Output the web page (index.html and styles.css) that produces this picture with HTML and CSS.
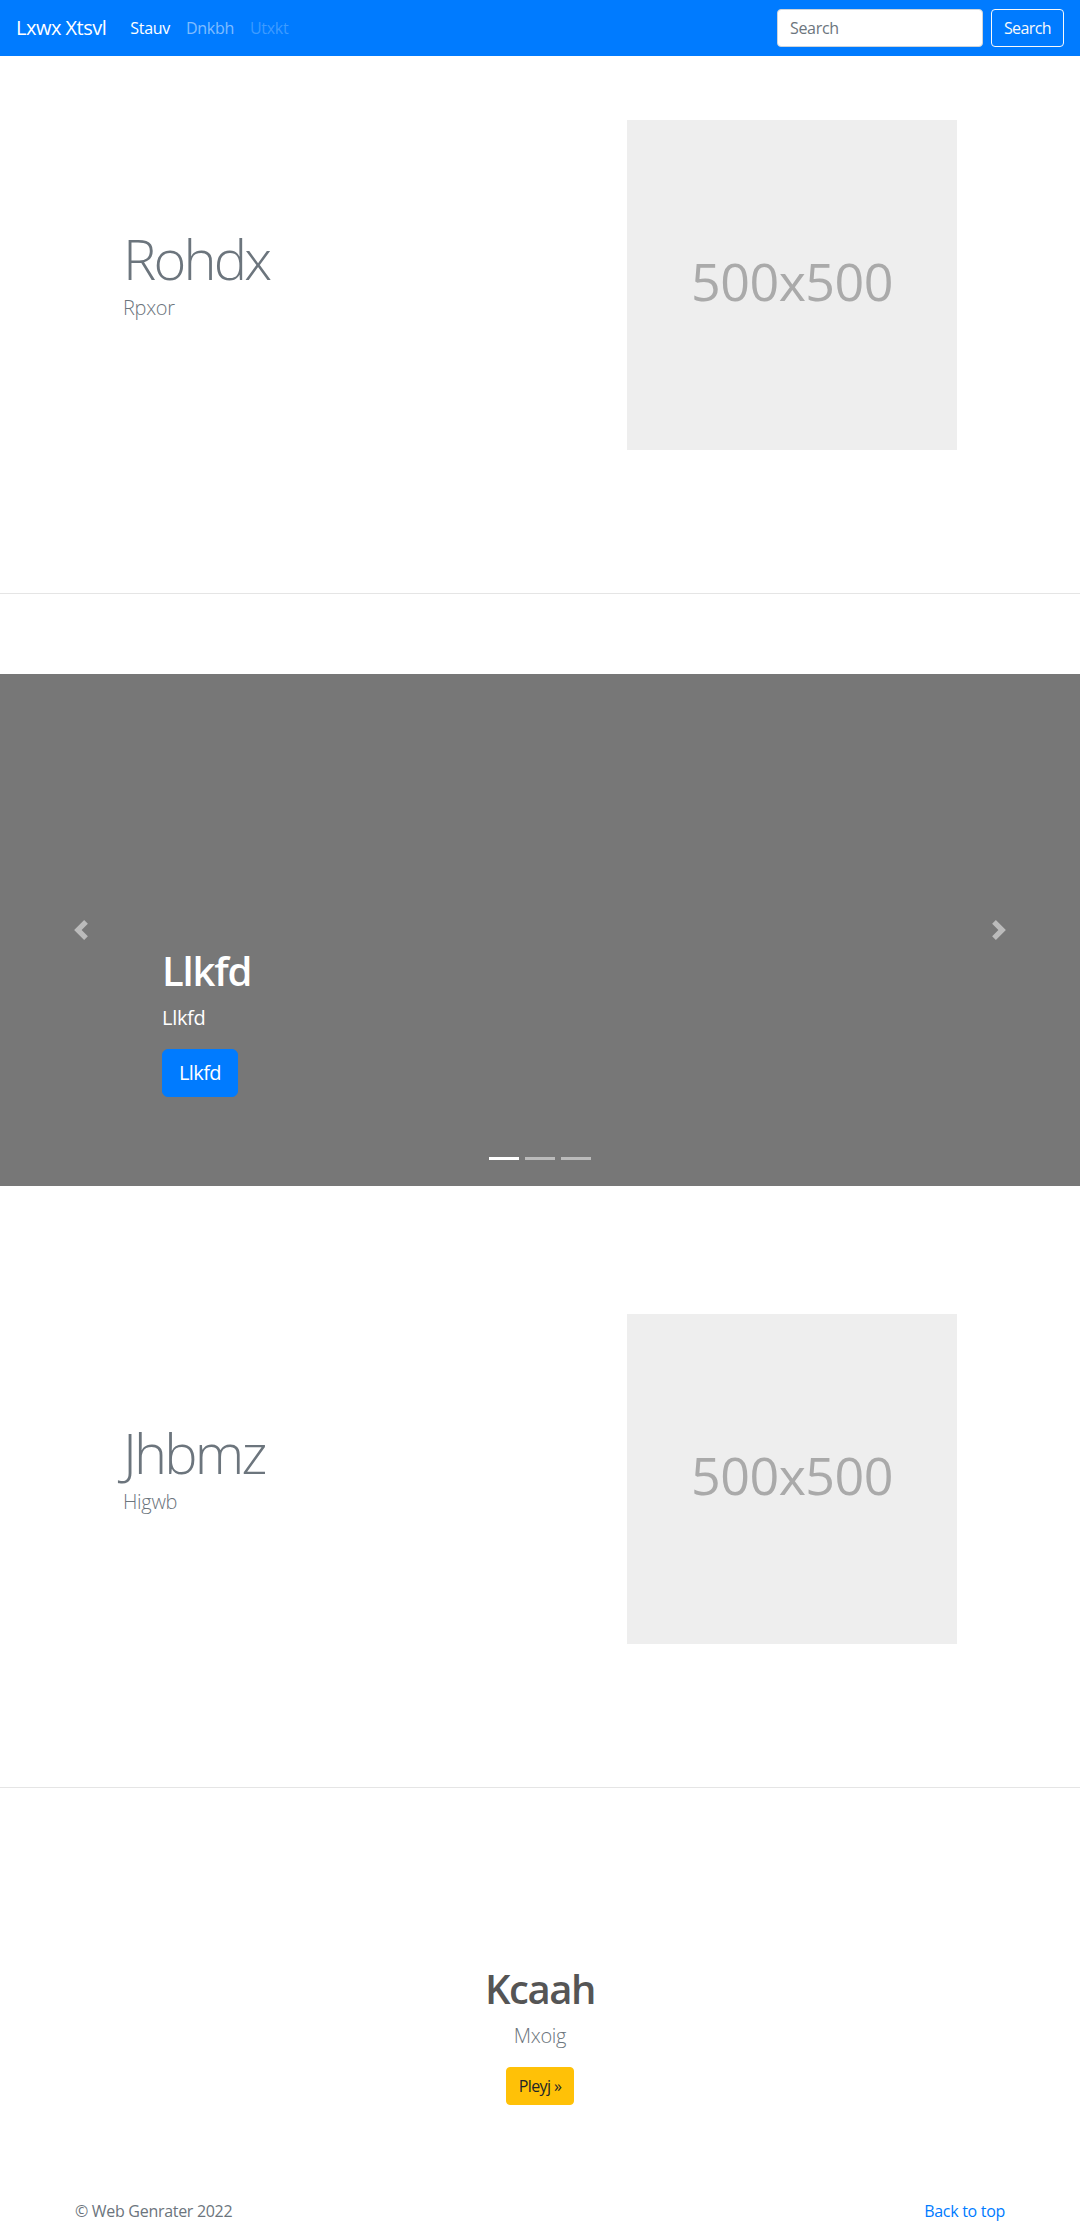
FILE: index.html
```html
<!DOCTYPE html>
<html lang="en">
<head>
<meta charset="utf-8">
<title>Lxwx Xtsvl</title>
<link rel="stylesheet" href="styles.css">
</head>
<body>
<header class="navbar">
  <a class="brand" href="#">Lxwx Xtsvl</a>
  <nav class="nav">
    <a class="nav-link active" href="#">Stauv</a>
    <a class="nav-link" href="#">Dnkbh</a>
    <a class="nav-link disabled">Utxkt</a>
  </nav>
  <form class="search">
    <input class="search-input" type="text" placeholder="Search">
    <button class="btn btn-outline-light" type="button">Search</button>
  </form>
</header>

<main>
  <section class="feature">
    <div class="container feature-row">
      <div class="feature-text">
        <h2 class="display">Rohdx</h2>
        <p class="lead">Rpxor</p>
      </div>
      <div class="feature-media">
        <div class="placeholder">500x500</div>
      </div>
    </div>
  </section>

  <hr class="divider">

  <div class="carousel">
    <div class="caption">
      <h1 class="caption-title">Llkfd</h1>
      <p class="caption-text">Llkfd</p>
      <p class="caption-action"><a class="btn btn-lg btn-primary" href="#">Llkfd</a></p>
    </div>
    <a class="carousel-control prev" href="#">
      <svg width="20" height="20" viewBox="0 0 8 8" fill="#fff"><path d="M5.25 0l-4 4 4 4 1.5-1.5L4.25 4l2.5-2.5L5.25 0z"/></svg>
    </a>
    <a class="carousel-control next" href="#">
      <svg width="20" height="20" viewBox="0 0 8 8" fill="#fff"><path d="M2.75 0l-1.5 1.5L3.75 4l-2.5 2.5L2.75 8l4-4-4-4z"/></svg>
    </a>
    <ol class="indicators">
      <li class="active"></li>
      <li></li>
      <li></li>
    </ol>
  </div>

  <section class="feature">
    <div class="container feature-row">
      <div class="feature-text">
        <h2 class="display">Jhbmz</h2>
        <p class="lead">Higwb</p>
      </div>
      <div class="feature-media">
        <div class="placeholder">500x500</div>
      </div>
    </div>
  </section>

  <hr class="divider">

  <section class="cta">
    <h2 class="cta-title">Kcaah</h2>
    <p class="lead cta-lead">Mxoig</p>
    <p class="cta-action"><a class="btn btn-warning" href="#">Pleyj &raquo;</a></p>
  </section>
</main>

<footer class="container footer">
  <span class="copy">&copy; Web Genrater 2022</span>
  <a class="top-link" href="#">Back to top</a>
</footer>
</body>
</html>
```

FILE: styles.css
```css
* {
  box-sizing: border-box;
}

html,
body {
  margin: 0;
}

body {
  font-family: "Segoe UI", "Open Sans", "Noto Sans", sans-serif;
  font-size: 16px;
  line-height: 1.5;
  letter-spacing: -0.3px;
  color: #212529;
  background: #fff;
}

a {
  text-decoration: none;
}

p {
  margin: 0 0 16px;
}

/* ---------- navbar ---------- */
.navbar {
  display: flex;
  align-items: center;
  height: 56px;
  padding: 8px 16px;
  background: #007bff;
}

.brand {
  font-size: 20px;
  line-height: 30px;
  letter-spacing: -0.5px;
  padding: 5px 0;
  margin-right: 16px;
  color: #fff;
}

.nav {
  display: flex;
  flex: 1;
}

.nav-link {
  padding: 8px;
  color: rgba(255, 255, 255, 0.5);
}

.nav-link.active {
  color: #fff;
}

.nav-link.disabled {
  color: rgba(255, 255, 255, 0.25);
}

.search {
  display: flex;
  gap: 8px;
}

.search-input {
  width: 206px;
  height: 38px;
  padding: 6px 12px;
  font: inherit;
  letter-spacing: inherit;
  color: #495057;
  background: #fff;
  border: 1px solid #ced4da;
  border-radius: 4px;
}

.search-input::placeholder {
  color: #6c757d;
}

.btn {
  display: inline-block;
  font-family: inherit;
  font-size: 16px;
  line-height: 24px;
  letter-spacing: -0.6px;
  padding: 6px 12px;
  border: 1px solid transparent;
  border-radius: 4px;
  cursor: pointer;
}

.btn-outline-light {
  color: #f8f9fa;
  background: transparent;
  border-color: #f8f9fa;
}

.btn-lg {
  font-size: 20px;
  line-height: 30px;
  padding: 8px 16px;
  border-radius: 6px;
}

.btn-primary {
  color: #fff;
  background: #007bff;
  border-color: #007bff;
}

.btn-warning {
  color: #212529;
  background: #ffc107;
  border-color: #ffc107;
}

/* ---------- layout ---------- */
.container {
  width: 960px;
  margin: 0 auto;
  padding: 0 15px;
}

.feature {
  padding: 63.5px 0;
}

.feature-row {
  display: flex;
  align-items: center;
}

.feature-text {
  flex: 0 0 50%;
  padding-left: 48px;
}

.feature-media {
  flex: 0 0 50%;
  display: flex;
  justify-content: flex-end;
  padding-right: 48px;
}

.display {
  margin: 0 0 6px;
  font-size: 56px;
  font-weight: 300;
  line-height: 1.03;
  letter-spacing: -2.8px;
  color: #6c757d;
}

.lead {
  font-size: 20px;
  font-weight: 300;
  line-height: 30px;
  color: #6c757d;
}

.placeholder {
  width: 330px;
  height: 330px;
  display: flex;
  align-items: center;
  justify-content: center;
  padding-bottom: 8px;
  background: #eee;
  color: #aaa;
  font-size: 52px;
  letter-spacing: -0.5px;
}

.divider {
  margin: 80px 0;
  border: 0;
  border-top: 1px solid rgba(0, 0, 0, 0.1);
}

/* ---------- carousel ---------- */
.carousel {
  position: relative;
  height: 512px;
  margin-bottom: 64px;
  background: #777;
  overflow: hidden;
}

.caption {
  position: absolute;
  left: 15%;
  right: 15%;
  bottom: 53px;
  padding: 20px 0;
  color: #fff;
}

.caption-title {
  margin: 0 0 8px;
  font-size: 40px;
  font-weight: 600;
  line-height: 1.2;
  letter-spacing: -1.2px;
}

.caption-text {
  font-size: 20px;
  line-height: 30px;
}

.carousel-control {
  position: absolute;
  top: 0;
  bottom: 0;
  width: 15%;
  display: flex;
  align-items: center;
  justify-content: center;
  opacity: 0.5;
}

.carousel-control.prev {
  left: 0;
}

.carousel-control.next {
  right: 0;
}

.indicators {
  position: absolute;
  left: 0;
  right: 0;
  bottom: 0;
  display: flex;
  justify-content: center;
  margin: 0 0 16px;
  padding: 0;
  list-style: none;
}

.indicators li {
  box-sizing: content-box;
  width: 30px;
  height: 3px;
  margin: 0 3px;
  background: #fff;
  background-clip: padding-box;
  border-top: 10px solid transparent;
  border-bottom: 10px solid transparent;
  opacity: 0.5;
}

.indicators li.active {
  opacity: 1;
}

/* ---------- call to action ---------- */
.cta {
  padding: 97px 0 30px;
  text-align: center;
}

.cta-title {
  margin: 0 0 8px;
  font-size: 40px;
  font-weight: 600;
  line-height: 1.2;
  letter-spacing: -1.4px;
  color: #555;
}

/* ---------- footer ---------- */
.footer {
  display: flex;
  justify-content: space-between;
  padding-top: 48px;
  padding-bottom: 48px;
  color: #6c757d;
}

.top-link {
  color: #007bff;
}
```
